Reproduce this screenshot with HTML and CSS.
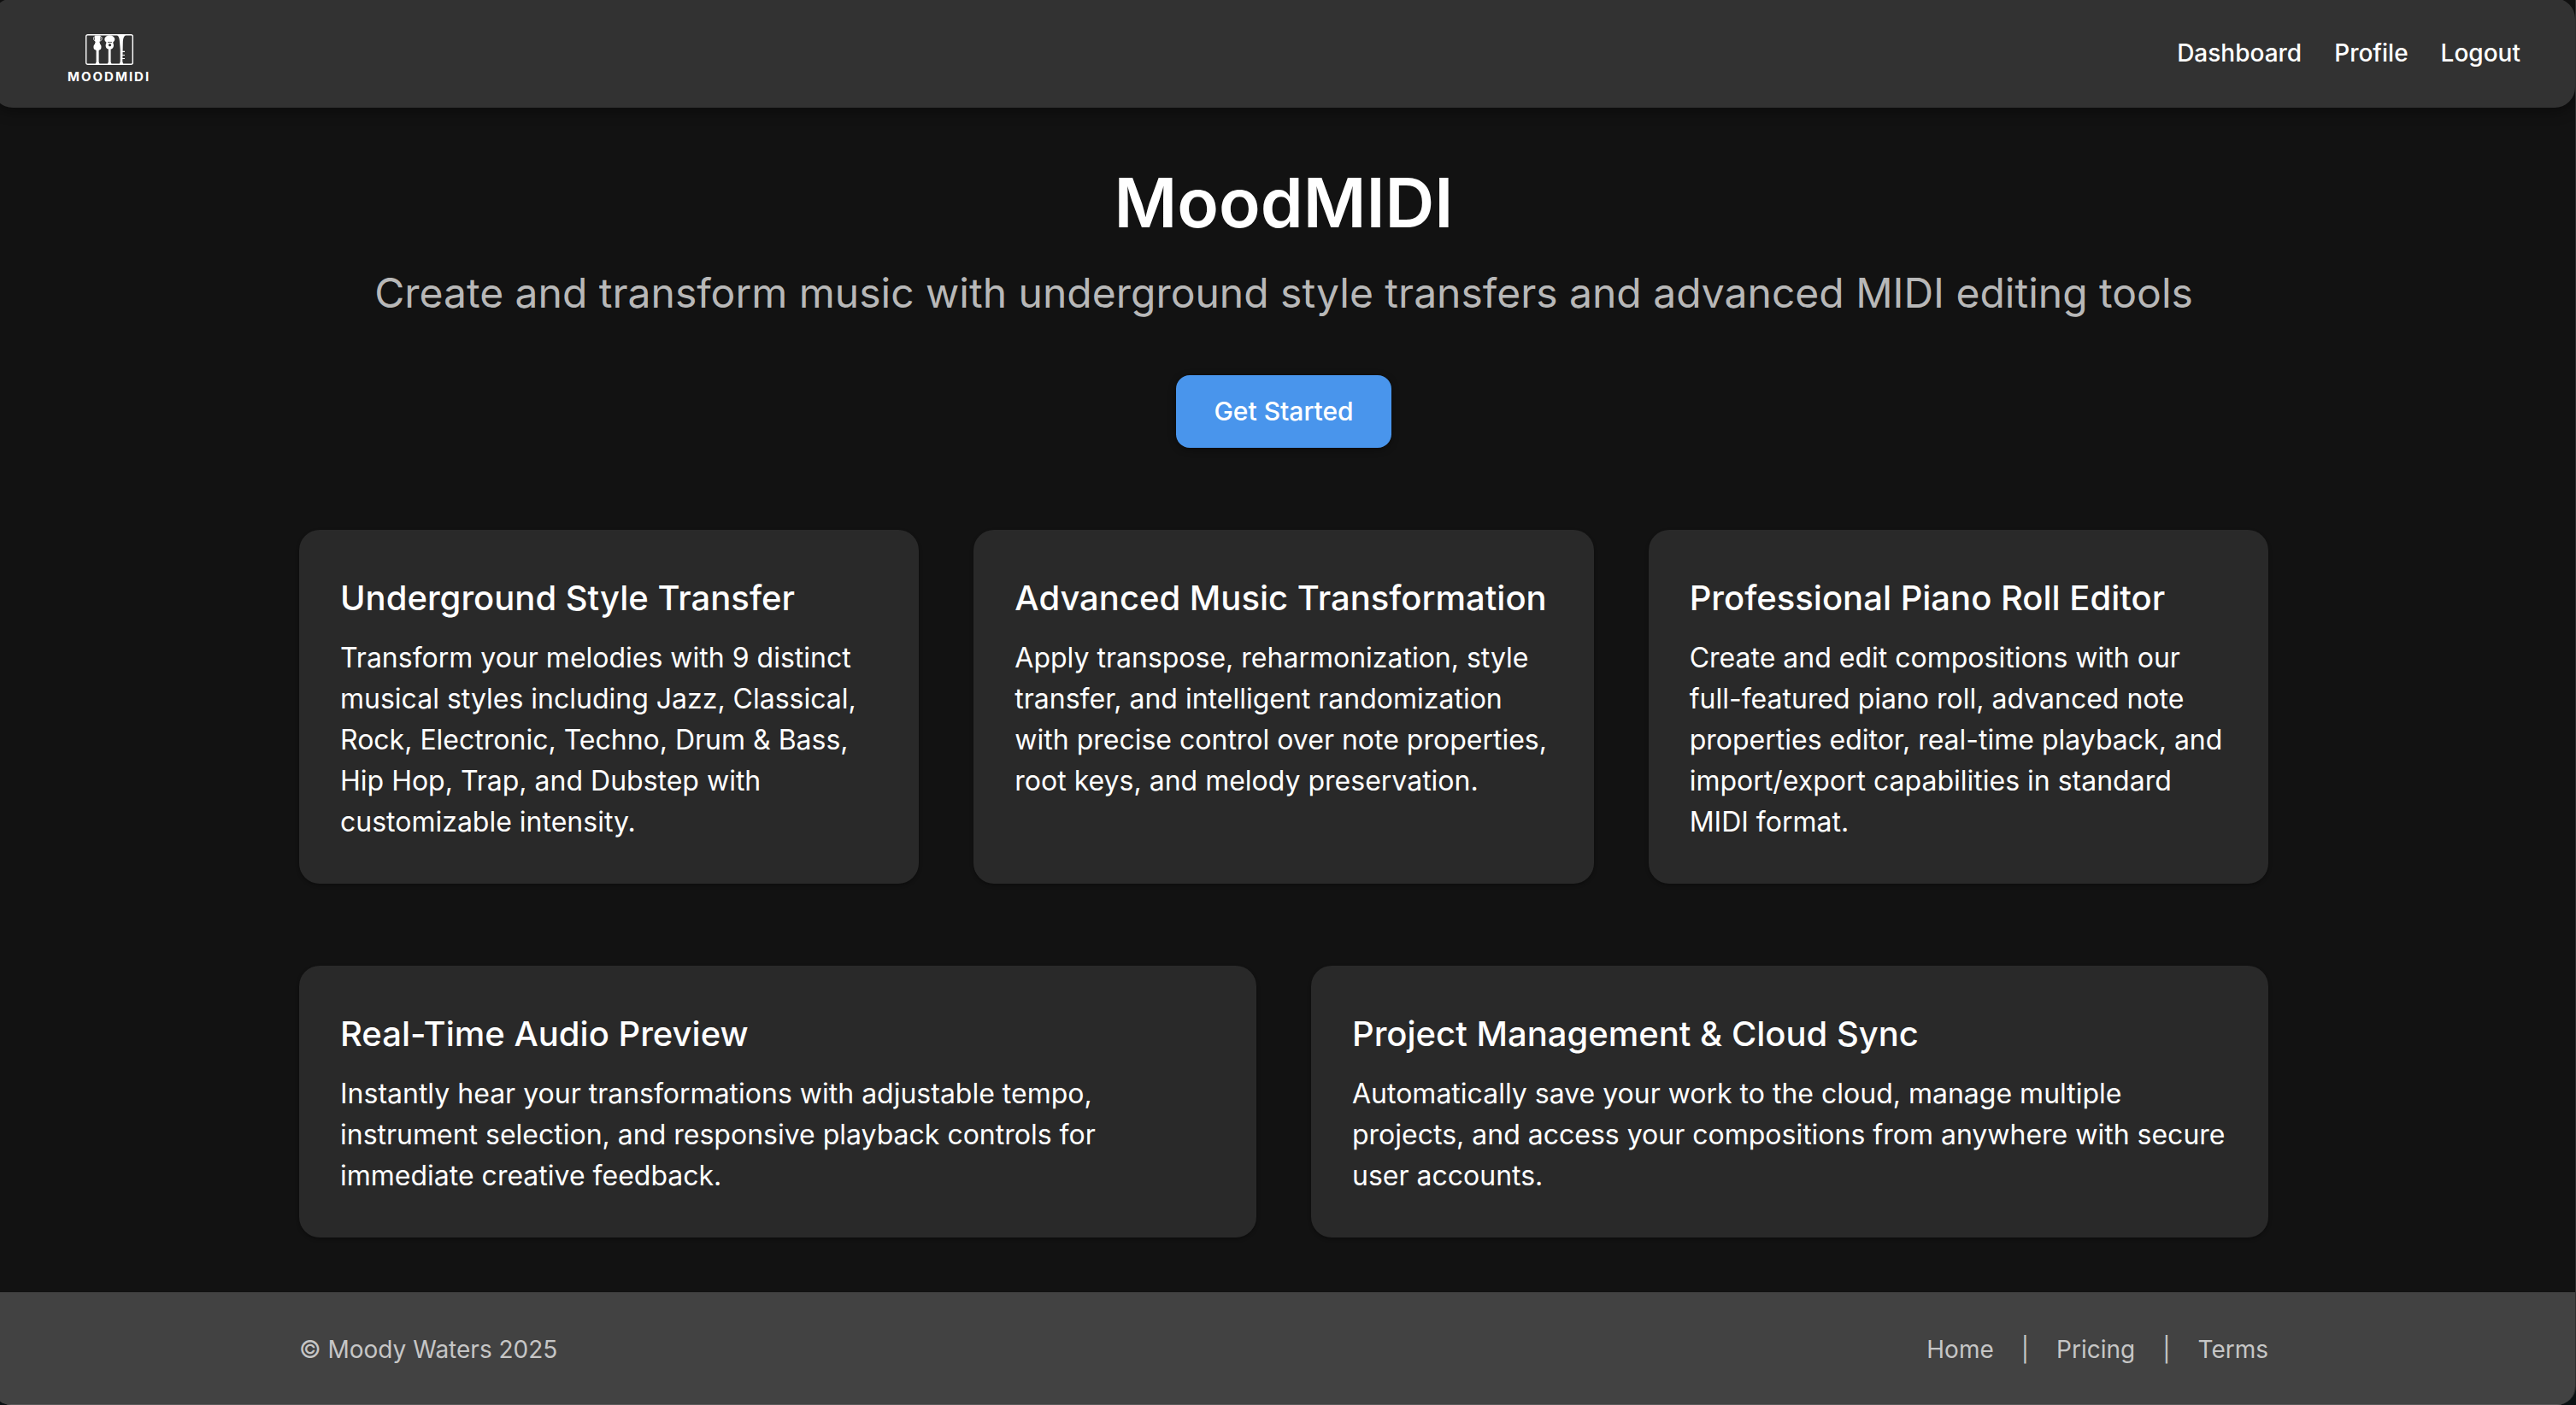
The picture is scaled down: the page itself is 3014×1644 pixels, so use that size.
FILE: index.html
```html
<!DOCTYPE html>
<html lang="en">
<head>
<meta charset="utf-8">
<meta name="viewport" content="width=device-width, initial-scale=1">
<title>MoodMIDI</title>
<link rel="stylesheet" href="styles.css">
</head>
<body>
<div class="page">
  <header class="topbar">
    <a class="logo" href="#">
      <svg class="logo-mark" viewBox="0 0 56 36" aria-hidden="true">
        <rect x="0.7" y="0.7" width="54.6" height="34.6" rx="2" fill="none" stroke="#fff" stroke-width="1.400"/>
        <g fill="#fff">
          <path d="M11.300 1.500h6c.5 3 .3 5.500-.9 7.500l.8 2.700c1.500 1.200 1.700 3.700.8 5.800L15.600 19v13.500l1 2.500h-5l1-2.500V19L10 17.500c-.9-2.100-.7-4.600.8-5.800l.9-2.700c-1.200-2-1.200-4.500-.4-7.500z"/>
          <ellipse cx="28.300" cy="6" rx="6" ry="4.700"/>
          <path d="M24.500 9h7.700c-.2 1.400.9 2.500.8 4.200-.1 2.500-1.600 4.100-3.400 4.300v15l1 2.500h-4.800l1-2.500v-15c-1.900-.3-3.100-1.800-3.200-4.300 0-1.700 1.100-2.800.9-4.200z"/>
          <path d="M37 1h10.200c-2.700 1.500-3.200 5-3.400 9L43.300 32l1 3h-4.600l1-3V18l-.6-8c-.3-4-.7-7.500-3.100-9z"/>
          <path d="M43 19.800h3v1.100h-3zM43 23.900h3V25h-3zM43 28h3v1.100h-3z"/>
        </g>
        <path d="M12 2.500c-3.300-.3-3.300 5.500.3 5.800M16.700 2.500c3.300-.3 3.300 5.500-.3 5.800" fill="none" stroke="#fff" stroke-width="0.900"/>
        <circle cx="28.500" cy="12.700" r="1.600" fill="#323232"/>
        <path d="M26 9.400h5" stroke="#323232" stroke-width="0.800"/>
      </svg>
      <span class="logo-name">MOODMIDI</span>
    </a>
    <nav class="topnav" aria-label="Main">
      <a href="#">Dashboard</a>
      <a href="#">Profile</a>
      <a href="#">Logout</a>
    </nav>
  </header>

  <main class="container content">
    <section class="hero">
      <h1>MoodMIDI</h1>
      <p class="tagline">Create and transform music with underground style transfers and advanced MIDI editing tools</p>
      <button class="cta" type="button">Get Started</button>
    </section>

    <section class="cards cards-three">
      <article class="card">
        <h2>Underground Style Transfer</h2>
        <p>Transform your melodies with 9 distinct musical styles including Jazz, Classical, Rock, Electronic, Techno, Drum &amp; Bass, Hip Hop, Trap, and Dubstep with customizable intensity.</p>
      </article>
      <article class="card">
        <h2>Advanced Music Transformation</h2>
        <p>Apply transpose, reharmonization, style transfer, and intelligent randomization with precise control over note properties, root keys, and melody preservation.</p>
      </article>
      <article class="card">
        <h2>Professional Piano Roll Editor</h2>
        <p>Create and edit compositions with our full-featured piano roll, advanced note properties editor, real-time playback, and import/export capabilities in standard MIDI format.</p>
      </article>
    </section>

    <section class="cards cards-two">
      <article class="card">
        <h2>Real-Time Audio Preview</h2>
        <p>Instantly hear your transformations with adjustable tempo, instrument selection, and responsive playback controls for immediate creative feedback.</p>
      </article>
      <article class="card">
        <h2>Project Management &amp; Cloud Sync</h2>
        <p>Automatically save your work to the cloud, manage multiple projects, and access your compositions from anywhere with secure user accounts.</p>
      </article>
    </section>
  </main>

  <footer class="footer">
    <div class="container footer-row">
      <span>© Moody Waters 2025</span>
      <nav class="footnav" aria-label="Footer">
        <a href="#">Home</a>
        <span aria-hidden="true">|</span>
        <a href="#">Pricing</a>
        <span aria-hidden="true">|</span>
        <a href="#">Terms</a>
      </nav>
    </div>
  </footer>
</div>
</body>
</html>
```

FILE: styles.css
```css
*, *::before, *::after { box-sizing: border-box; }

html { background: #0b1113; }

body {
  margin: 0;
  color: #fff;
  font-family: Inter, "Liberation Sans", sans-serif;
  font-size: 32px;
  line-height: 48px;
  overflow-x: hidden;
}

h1, h2, p { margin: 0; }
a { color: inherit; text-decoration: none; }

.page {
  display: flex;
  flex-direction: column;
  min-height: calc(100vh + 2px);
  margin: -2px 0 0 -9px;
  background: #121212;
  border-right: 1px solid #2e2e2e;
  border-radius: 0 0 22px 22px;
  overflow: hidden;
}

.topbar {
  display: flex;
  align-items: center;
  justify-content: space-between;
  min-height: 128px;
  padding: 0 64px 0 88px;
  background: #323232;
  border-radius: 24px;
  box-shadow: 0 4px 16px rgba(0, 0, 0, 0.4);
}

.logo {
  display: flex;
  flex-direction: column;
  align-items: center;
  gap: 6px;
  padding-top: 14px;
}

.logo-mark { width: 56px; height: 36px; }

.logo-name {
  font-size: 15px;
  font-weight: 700;
  line-height: 16px;
  letter-spacing: 2px;
}

.topnav {
  display: flex;
  gap: 38px;
  font-size: 28px;
  font-weight: 500;
}

.container {
  width: 100%;
  max-width: 2400px;
  margin: 0 auto;
  padding: 0 48px;
}

.content {
  display: flex;
  flex-direction: column;
  flex: 1;
  gap: 96px;
  padding-top: 64px;
  padding-bottom: 64px;
}

.hero {
  display: flex;
  flex-direction: column;
  align-items: center;
  text-align: center;
}

.hero h1 {
  margin-bottom: 28px;
  font-size: 80px;
  font-weight: 600;
  line-height: 93px;
}

.tagline {
  margin-bottom: 64px;
  color: #b8b8b8;
  font-size: 48px;
  line-height: 64px;
}

.cta {
  min-width: 252px;
  padding: 16px 44px;
  border: 0;
  border-radius: 16px;
  background: #4995ec;
  color: #fff;
  font: 500 30px/53px Inter, "Liberation Sans", sans-serif;
  box-shadow: 0 2px 8px rgba(0, 0, 0, 0.4);
  cursor: pointer;
}

.cards { display: grid; gap: 64px; }
.cards-three { grid-template-columns: repeat(3, 1fr); }
.cards-two { grid-template-columns: repeat(2, 1fr); }

.card {
  padding: 48px;
  background: #292929;
  border-radius: 24px;
  box-shadow: 0 2px 4px rgba(0, 0, 0, 0.3);
}

.card h2 {
  margin-bottom: 14px;
  font-size: 40px;
  font-weight: 500;
  line-height: 64px;
}

.footer {
  padding: 46px 0 42px;
  background: #424242;
  border-bottom: 1px solid #5a5a5a;
  color: #c6c6c6;
  font-size: 28px;
  line-height: 43px;
}

.footer-row {
  display: flex;
  align-items: center;
  justify-content: space-between;
}

.footnav { display: flex; gap: 32px; }
```
